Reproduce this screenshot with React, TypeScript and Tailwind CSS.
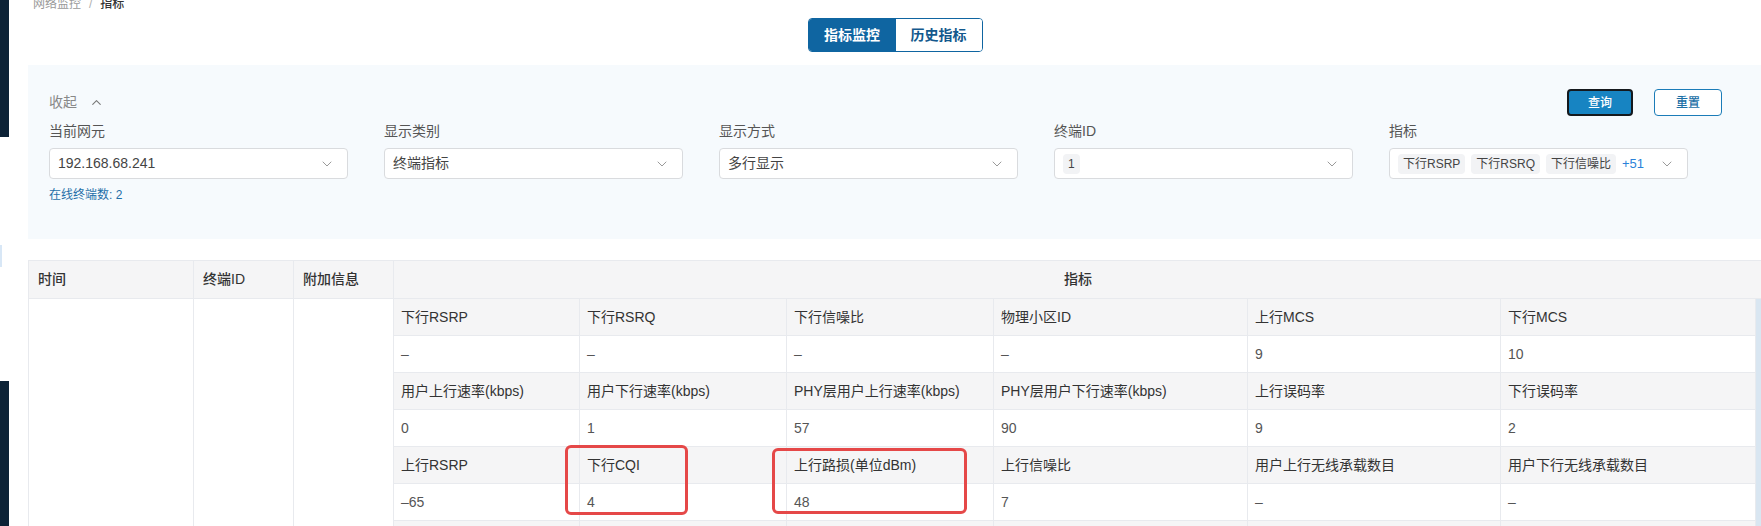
import { ChevronDown, ChevronUp } from "lucide-react";

const font = "font-['Liberation_Sans','Noto_Sans_CJK_SC',sans-serif]";

const metricRows = [
    {
        labels: ["下行RSRP", "下行RSRQ", "下行信噪比", "物理小区ID", "上行MCS", "下行MCS"],
        values: ["–", "–", "–", "–", "9", "10"],
    },
    {
        labels: [
            "用户上行速率(kbps)",
            "用户下行速率(kbps)",
            "PHY层用户上行速率(kbps)",
            "PHY层用户下行速率(kbps)",
            "上行误码率",
            "下行误码率",
        ],
        values: ["0", "1", "57", "90", "9", "2"],
    },
    {
        labels: ["上行RSRP", "下行CQI", "上行路损(单位dBm)", "上行信噪比", "用户上行无线承载数目", "用户下行无线承载数目"],
        values: ["–65", "4", "48", "7", "–", "–"],
    },
    {
        labels: ["", "", "", "", "", ""],
        values: ["", "", "", "", "", ""],
    },
];

type SelectProps = {
    children: React.ReactNode;
};

function Select({ children }: SelectProps) {
    return (
        <div className="flex h-[31px] w-[299px] items-center rounded-[4px] border border-[#d9dbde] bg-white pl-[8px] pr-[12px]">
            <div className="flex flex-1 items-center gap-[6px] overflow-hidden">{children}</div>
            <ChevronDown className="h-[16px] w-[16px] text-[#9a9a9a]" strokeWidth={1.5} />
        </div>
    );
}

function Chip({ text }: { text: string }) {
    return (
        <span className="flex h-[20px] items-center rounded-[4px] bg-[#f2f3f5] px-[5px] text-[12px] text-[#444]">
            {text}
        </span>
    );
}

function Field({ label, children }: { label: string; children: React.ReactNode }) {
    return (
        <div className="flex flex-col">
            <div className="h-[20px] text-[14px] leading-[20px] text-[#555]">{label}</div>
            <div className="mt-[7px]">{children}</div>
        </div>
    );
}

export default function App() {
    return (
        <div className={`flex h-[526px] w-[1761px] overflow-hidden bg-white ${font}`}>
            {/* sidebar edge */}
            <div className="flex w-[9px] shrink-0 flex-col">
                <div className="h-[137px] shrink-0 bg-[#0c2236]" />
                <div className="h-[108px] shrink-0" />
                <div className="h-[22px] w-[2px] shrink-0 bg-[#d8e7f6]" />
                <div className="h-[114px] shrink-0" />
                <div className="flex-1 bg-[#0c2236]" />
            </div>

            <div className="ml-[19px] flex flex-1 flex-col">
                {/* breadcrumb */}
                <div className="mt-[-6px] flex h-[20px] shrink-0 items-center gap-[8px] pl-[5px] text-[12px] leading-[20px]">
                    <span className="text-[#9a9a9a]">网络监控</span>
                    <span className="text-[#b0b0b0]">/</span>
                    <span className="font-medium text-[#333]">指标</span>
                </div>

                {/* tabs */}
                <div className="mt-[4px] flex shrink-0 justify-center">
                    <div className="flex h-[34px] overflow-hidden rounded-[4px] border border-[#0f65a1]">
                        <div className="flex w-[87px] items-center justify-center bg-[#0f65a1] text-[14px] font-bold text-white">
                            指标监控
                        </div>
                        <div className="flex w-[86px] items-center justify-center bg-white text-[14px] font-bold text-[#14598d]">
                            历史指标
                        </div>
                    </div>
                </div>

                {/* filter panel */}
                <div className="mt-[13px] flex h-[174px] shrink-0 flex-col bg-[#f6fafd] pl-[21px] pt-[24px]">
                    <div className="flex h-[27px] items-center">
                        <div className="flex items-center gap-[12px] text-[14px] text-[#888]">
                            <span>收起</span>
                            <ChevronUp className="h-[15px] w-[15px] text-[#777]" strokeWidth={1.75} />
                        </div>
                        <div className="ml-auto mr-[40px] flex gap-[21px]">
                            <button className="flex h-[27px] w-[66px] items-center justify-center rounded-[4px] border-2 border-[#15191d] bg-[#1784c2] text-[12px] font-medium text-white">
                                查询
                            </button>
                            <button className="flex h-[27px] w-[68px] items-center justify-center rounded-[4px] border border-[#1b7cb8] bg-white text-[12px] font-medium text-[#1b6fa6]">
                                重置
                            </button>
                        </div>
                    </div>

                    <div className="mt-[5px] flex gap-[36px]">
                        <Field label="当前网元">
                            <Select>
                                <span className="text-[14px] text-[#444]">192.168.68.241</span>
                            </Select>
                        </Field>
                        <Field label="显示类别">
                            <Select>
                                <span className="text-[14px] text-[#444]">终端指标</span>
                            </Select>
                        </Field>
                        <Field label="显示方式">
                            <Select>
                                <span className="text-[14px] text-[#444]">多行显示</span>
                            </Select>
                        </Field>
                        <Field label="终端ID">
                            <Select>
                                <Chip text="1" />
                            </Select>
                        </Field>
                        <Field label="指标">
                            <Select>
                                <Chip text="下行RSRP" />
                                <Chip text="下行RSRQ" />
                                <Chip text="下行信噪比" />
                                <span className="text-[13px] font-medium text-[#2b82d9]">+51</span>
                            </Select>
                        </Field>
                    </div>

                    <div className="mt-[8px] h-[16px] text-[12px] leading-[16px] text-[#1f6fa8]">在线终端数: 2</div>
                </div>

                {/* table */}
                <div className="relative mt-[21px] flex flex-1 flex-col border-l border-t border-[#e8eaee]">
                    <div className="flex h-[38px] shrink-0 border-b border-[#e8eaee] bg-[#f5f5f6] text-[14px] font-medium text-[#333]">
                        <div className="flex w-[165px] items-center border-r border-[#e8eaee] pl-[9px]">时间</div>
                        <div className="flex w-[100px] items-center border-r border-[#e8eaee] pl-[9px]">终端ID</div>
                        <div className="flex w-[100px] items-center border-r border-[#e8eaee] pl-[9px]">附加信息</div>
                        <div className="flex flex-1 items-center justify-center">指标</div>
                    </div>
                    <div className="flex flex-1">
                        <div className="w-[165px] border-r border-[#e8eaee]" />
                        <div className="w-[100px] border-r border-[#e8eaee]" />
                        <div className="w-[100px] border-r border-[#e8eaee]" />
                        <div className="flex flex-1">
                            <div className="grid flex-1 auto-rows-[37px] grid-cols-[186px_207px_207px_254px_253px_255px] content-start text-[14px]">
                                {metricRows.map((row, r) => [
                                    ...row.labels.map((label, i) => (
                                        <div
                                            key={`l${r}-${i}`}
                                            className="flex items-center border-b border-r border-[#e8eaee] bg-[#f5f5f6] pl-[7px] text-[#333]"
                                        >
                                            {label}
                                        </div>
                                    )),
                                    ...row.values.map((value, i) => (
                                        <div
                                            key={`v${r}-${i}`}
                                            className="flex items-center border-b border-r border-[#e8eaee] bg-white pl-[7px] text-[#555]"
                                        >
                                            {value}
                                        </div>
                                    )),
                                ])}
                            </div>
                            <div className="w-[6px] bg-[#d9e6f1]" />
                        </div>
                    </div>

                    {/* highlight marks */}
                    <div className="absolute left-[536px] top-[184px] h-[70px] w-[123px] rounded-[6px] border-[3px] border-[#e54848]" />
                    <div className="absolute left-[743px] top-[187px] h-[66px] w-[195px] rounded-[6px] border-[3px] border-[#e54848]" />
                </div>
            </div>
        </div>
    );
}
